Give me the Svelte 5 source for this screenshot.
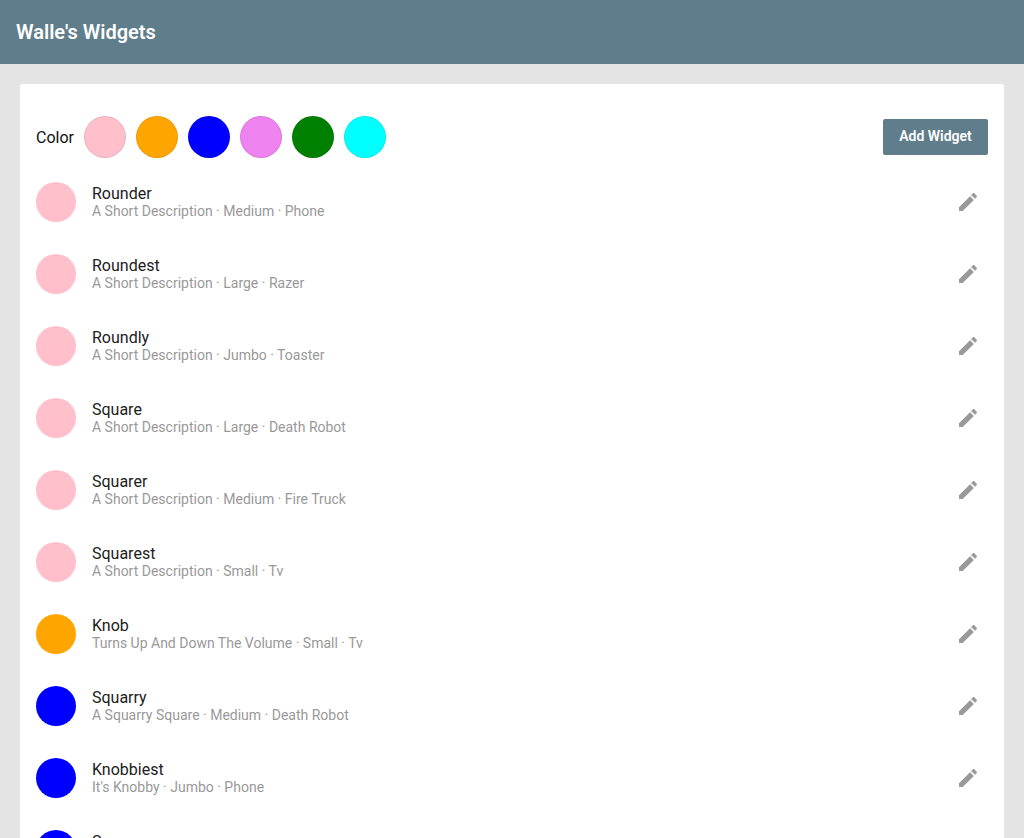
<script>
  const colors = ['pink', 'orange', 'blue', 'violet', 'green', 'cyan'];
  const widgets = [
    { name: 'Rounder', color: 'pink', detail: 'A Short Description · Medium · Phone' },
    { name: 'Roundest', color: 'pink', detail: 'A Short Description · Large · Razer' },
    { name: 'Roundly', color: 'pink', detail: 'A Short Description · Jumbo · Toaster' },
    { name: 'Square', color: 'pink', detail: 'A Short Description · Large · Death Robot' },
    { name: 'Squarer', color: 'pink', detail: 'A Short Description · Medium · Fire Truck' },
    { name: 'Squarest', color: 'pink', detail: 'A Short Description · Small · Tv' },
    { name: 'Knob', color: 'orange', detail: 'Turns Up And Down The Volume · Small · Tv' },
    { name: 'Squarry', color: 'blue', detail: 'A Squarry Square · Medium · Death Robot' },
    { name: 'Knobbiest', color: 'blue', detail: "It's Knobby · Jumbo · Phone" },
    { name: 'S', color: 'blue', detail: '' }
  ];
</script>

<div class="page">
  <header><h1>Walle's Widgets</h1></header>
  <main>
    <div class="toolbar">
      <span class="label">Color</span>
      <div class="swatches">
        {#each colors as color}
          <button class="swatch" aria-label={color} style="background-color: {color}"></button>
        {/each}
      </div>
      <button class="add">Add Widget</button>
    </div>
    <ul>
      {#each widgets as widget}
        <li>
          <span class="avatar" style="background-color: {widget.color}"></span>
          <div class="text">
            <div class="name">{widget.name}</div>
            <div class="detail">{widget.detail}</div>
          </div>
          <button class="edit" aria-label="Edit">
            <svg viewBox="0 0 24 24" width="24" height="24">
              <path d="M3 17.25V21h3.75L17.81 9.94l-3.75-3.75L3 17.25zM20.71 7.04c.39-.39.39-1.02 0-1.41l-2.34-2.34c-.39-.39-1.02-.39-1.41 0l-1.83 1.83 3.75 3.75 1.83-1.83z" />
            </svg>
          </button>
        </li>
      {/each}
    </ul>
  </main>
</div>

<style>
  :global(body) {
    margin: 0;
  }
  .page {
    box-sizing: border-box;
    height: 100vh;
    overflow: hidden;
    background: #e4e4e4;
    font-family: Roboto, sans-serif;
    color: #212121;
  }
  header {
    display: flex;
    align-items: center;
    height: 64px;
    padding: 0 16px;
    background: #607d8b;
  }
  h1 {
    margin: 0;
    font-size: 20px;
    font-weight: 600;
    line-height: 24px;
    color: #fff;
  }
  main {
    margin: 20px;
    padding: 32px 16px 16px;
    background: #fff;
    border-radius: 3px;
  }
  .toolbar {
    display: flex;
    align-items: center;
    height: 42px;
    margin-bottom: 8px;
  }
  .label {
    width: 38px;
    margin-right: 10px;
    padding-top: 1px;
    font-size: 16px;
    line-height: 20px;
    color: #111;
  }
  .swatches {
    display: flex;
    gap: 10px;
  }
  button {
    padding: 0;
    border: 0;
    background: none;
    font-family: inherit;
  }
  .swatch {
    box-sizing: border-box;
    width: 42px;
    height: 42px;
    border: 1px solid rgba(0, 0, 0, 0.08);
    border-radius: 50%;
  }
  .add {
    width: 105px;
    height: 36px;
    margin-left: auto;
    padding-bottom: 2px;
    border-radius: 2px;
    background: #607d8b;
    color: #fff;
    font-size: 14px;
    font-weight: 600;
  }
  ul {
    margin: 0;
    padding: 0;
    list-style: none;
  }
  li {
    display: flex;
    align-items: center;
    height: 72px;
  }
  .avatar {
    width: 40px;
    height: 40px;
    margin-right: 16px;
    border-radius: 50%;
  }
  .text {
    flex: 1;
    line-height: 18px;
  }
  .name {
    height: 18px;
    font-size: 16px;
    line-height: 20px;
  }
  .detail {
    height: 18px;
    font-size: 14px;
    color: #999;
  }
  .edit {
    display: flex;
    padding: 8px;
  }
  svg {
    fill: #999;
  }
</style>
